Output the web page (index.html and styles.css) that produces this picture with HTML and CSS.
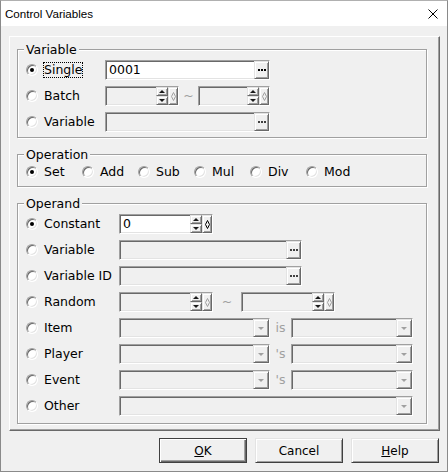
FILE: index.html
```html
<!DOCTYPE html>
<html>
<head>
<meta charset="utf-8">
<link rel="stylesheet" href="styles.css">
</head>
<body>
<div class="window">
  <div class="titlebar">
    <span class="title">Control Variables</span>
    <svg class="close" viewBox="0 0 10 10" width="10" height="10"><path d="M0.5 0.5 L9.5 9.5 M9.5 0.5 L0.5 9.5" stroke="#000" stroke-width="1" fill="none"/></svg>
  </div>
  <div class="client">
    <div class="panel">
      <div class="group g-var">
        <span class="legend">Variable</span>
        <div class="row">
          <div class="opt c79"><span class="radio on"></span><span class="lbl focus">Single</span></div>
          <div class="field en w165"><span class="val">0001</span><span class="btn dots"><i></i></span></div>
        </div>
        <div class="row">
          <div class="opt c79"><span class="radio"></span><span class="lbl">Batch</span></div>
          <div class="field w74"><span class="val"></span><span class="spin"><span class="btn up"><i></i></span><span class="btn down"><i></i></span></span><span class="btn dia"><svg viewBox="0 0 5 9" width="5" height="9"><path d="M2.5 0.5 L4.5 4.5 L2.5 8.5 L0.5 4.5 Z" fill="none" stroke="#a0a0a0"/></svg></span></div>
          <span class="sep w19">~</span>
          <div class="field w72"><span class="val"></span><span class="spin"><span class="btn up"><i></i></span><span class="btn down"><i></i></span></span><span class="btn dia"><svg viewBox="0 0 5 9" width="5" height="9"><path d="M2.5 0.5 L4.5 4.5 L2.5 8.5 L0.5 4.5 Z" fill="none" stroke="#a0a0a0"/></svg></span></div>
        </div>
        <div class="row">
          <div class="opt c79"><span class="radio"></span><span class="lbl">Variable</span></div>
          <div class="field w165"><span class="val"></span><span class="btn dots dis"><i></i></span></div>
        </div>
      </div>

      <div class="group g-op">
        <span class="legend">Operation</span>
        <div class="row">
          <div class="opt c56"><span class="radio on"></span><span class="lbl">Set</span></div>
          <div class="opt c56"><span class="radio"></span><span class="lbl">Add</span></div>
          <div class="opt c56"><span class="radio"></span><span class="lbl">Sub</span></div>
          <div class="opt c56"><span class="radio"></span><span class="lbl">Mul</span></div>
          <div class="opt c56"><span class="radio"></span><span class="lbl">Div</span></div>
          <div class="opt c56"><span class="radio"></span><span class="lbl">Mod</span></div>
        </div>
      </div>

      <div class="group g-opd">
        <span class="legend">Operand</span>
        <div class="row">
          <div class="opt c93"><span class="radio on"></span><span class="lbl">Constant</span></div>
          <div class="field en w94"><span class="val">0</span><span class="spin"><span class="btn up"><i></i></span><span class="btn down"><i></i></span></span><span class="btn dia"><svg viewBox="0 0 5 9" width="5" height="9"><path d="M2.5 0.5 L4.5 4.5 L2.5 8.5 L0.5 4.5 Z" fill="none" stroke="#000"/></svg></span></div>
        </div>
        <div class="row">
          <div class="opt c93"><span class="radio"></span><span class="lbl">Variable</span></div>
          <div class="field w183"><span class="val"></span><span class="btn dots dis"><i></i></span></div>
        </div>
        <div class="row">
          <div class="opt c93"><span class="radio"></span><span class="lbl">Variable ID</span></div>
          <div class="field w183"><span class="val"></span><span class="btn dots dis"><i></i></span></div>
        </div>
        <div class="row">
          <div class="opt c93"><span class="radio"></span><span class="lbl">Random</span></div>
          <div class="field w94"><span class="val"></span><span class="spin"><span class="btn up"><i></i></span><span class="btn down"><i></i></span></span><span class="btn dia"><svg viewBox="0 0 5 9" width="5" height="9"><path d="M2.5 0.5 L4.5 4.5 L2.5 8.5 L0.5 4.5 Z" fill="none" stroke="#a0a0a0"/></svg></span></div>
          <span class="sep w28">~</span>
          <div class="field w94"><span class="val"></span><span class="spin"><span class="btn up"><i></i></span><span class="btn down"><i></i></span></span><span class="btn dia"><svg viewBox="0 0 5 9" width="5" height="9"><path d="M2.5 0.5 L4.5 4.5 L2.5 8.5 L0.5 4.5 Z" fill="none" stroke="#a0a0a0"/></svg></span></div>
        </div>
        <div class="row">
          <div class="opt c93"><span class="radio"></span><span class="lbl">Item</span></div>
          <div class="field w151"><span class="val"></span><span class="btn drop"><i></i></span></div>
          <span class="sep w21">is</span>
          <div class="field w122"><span class="val"></span><span class="btn drop"><i></i></span></div>
        </div>
        <div class="row">
          <div class="opt c93"><span class="radio"></span><span class="lbl">Player</span></div>
          <div class="field w151"><span class="val"></span><span class="btn drop"><i></i></span></div>
          <span class="sep w21">'s</span>
          <div class="field w122"><span class="val"></span><span class="btn drop"><i></i></span></div>
        </div>
        <div class="row">
          <div class="opt c93"><span class="radio"></span><span class="lbl">Event</span></div>
          <div class="field w151"><span class="val"></span><span class="btn drop"><i></i></span></div>
          <span class="sep w21">'s</span>
          <div class="field w122"><span class="val"></span><span class="btn drop"><i></i></span></div>
        </div>
        <div class="row">
          <div class="opt c93"><span class="radio"></span><span class="lbl">Other</span></div>
          <div class="field w294"><span class="val"></span><span class="btn drop"><i></i></span></div>
        </div>
      </div>
    </div>
    <div class="buttons">
      <button class="pb def"><u>O</u>K</button>
      <button class="pb">Cancel</button>
      <button class="pb"><u>H</u>elp</button>
    </div>
  </div>
</div>
</body>
</html>
```

FILE: styles.css
```css
* { box-sizing: border-box; }
html, body { margin: 0; padding: 0; }
body {
  width: 448px; height: 472px; overflow: hidden;
  background: #f0f0f0;
  font-family: "DejaVu Sans", Verdana, sans-serif;
  font-size: 12.5px;
  color: #000;
}
.window {
  width: 448px; height: 472px;
  border: 1px solid #8a8a8a;
  border-top-color: #b0b0b0;
  background: #f0f0f0;
  display: flex; flex-direction: column;
}
.titlebar {
  height: 25px; flex: none;
  background: #fff;
  display: flex; align-items: center; justify-content: space-between;
  padding: 0 9px 0 4px;
}
.title { font-family: "Liberation Sans", Arial, sans-serif; font-size: 11.6px; color: #000; }
.close { display: block; }
.client { flex: 1; padding: 10px 0 0 8px; }

.panel {
  width: 431px; height: 395px;
  border-top: 1px solid #fff; border-left: 1px solid #fff;
  border-right: 1px solid #696969; border-bottom: 1px solid #696969;
  box-shadow: inset -1px -1px #a0a0a0;
  padding-top: 12px;
}

.group {
  position: relative;
  width: 410px; margin-left: 7px;
  border: 1px solid #a0a0a0;
  box-shadow: inset 1px 1px #fff, 1px 1px 0 #fff;
  display: flex; flex-direction: column; gap: 6px;
  padding-left: 8px;
}
.legend {
  position: absolute; top: -8px; left: 6px;
  padding: 0 2px; line-height: 15px;
  background: #f0f0f0;
}
.g-var { padding-top: 10px; padding-bottom: 5px; }
.g-op { margin-top: 16px; padding-top: 7px; padding-bottom: 4px; }
.g-opd { margin-top: 16px; padding-top: 10px; padding-bottom: 7px; }

.row { display: flex; align-items: center; height: 20px; }

.opt { display: flex; align-items: center; flex: none; height: 20px; }
.c79 { width: 79px; }
.c93 { width: 93px; }
.c56 { width: 56px; }

.radio {
  position: relative; flex: none;
  width: 12px; height: 12px; border-radius: 50%;
  background: #fff;
  border: 1px solid; border-color: #a0a0a0 #fff #fff #a0a0a0;
  box-shadow: inset 1px 1px #696969, inset -1px -1px #e3e3e3;
}
.radio.on::after {
  content: ""; position: absolute; left: 3px; top: 3px;
  width: 4px; height: 4px; border-radius: 50%; background: #000;
}
.lbl { margin-left: 5px; border: 1px dotted transparent; line-height: 14px; white-space: nowrap; }
.lbl.focus { border-color: #000; }

.field {
  flex: none; height: 20px;
  display: flex; align-items: stretch;
  border: 1px solid; border-color: #a0a0a0 #fff #fff #a0a0a0;
  box-shadow: inset 1px 1px #696969, inset -1px -1px #e3e3e3;
  background: #f0f0f0;
}
.field.en { background: #fff; }
.val { flex: 1; padding-left: 3px; line-height: 18px; }
.w165 { width: 165px; }
.w74 { width: 74px; }
.w72 { width: 72px; }
.w94 { width: 94px; }
.w183 { width: 183px; }
.w151 { width: 151px; }
.w122 { width: 122px; }
.w294 { width: 294px; }

.sep { flex: none; text-align: center; color: #a0a0a0; line-height: 20px; }
.w19 { width: 19px; }
.w28 { width: 28px; }
.w21 { width: 21px; }

.btn {
  flex: none;
  display: flex; align-items: center; justify-content: center;
  background: #f0f0f0;
  border: 1px solid; border-color: #e3e3e3 #696969 #696969 #e3e3e3;
  box-shadow: inset 1px 1px #fff, inset -1px -1px #a0a0a0;
}
.dots { width: 15px; }
.dots i {
  display: block; width: 8px; height: 2px;
  background: linear-gradient(90deg, #000 0 2px, transparent 2px 3px, #000 3px 5px, transparent 5px 6px, #000 6px 8px);
}
.dots.dis i {
  background: linear-gradient(90deg, #404040 0 2px, transparent 2px 3px, #404040 3px 5px, transparent 5px 6px, #404040 6px 8px);
}
.spin { flex: none; width: 12px; display: flex; flex-direction: column; }
.spin .btn { height: 9px; width: 12px; }
.up i { display: block; width: 0; height: 0; border-left: 3px solid transparent; border-right: 3px solid transparent; border-bottom: 3px solid #1a1a1a; }
.down i { display: block; width: 0; height: 0; border-left: 3px solid transparent; border-right: 3px solid transparent; border-top: 3px solid #1a1a1a; }
.dia { width: 10px; }
.dia svg { display: block; }
.drop { width: 16px; }
.drop i { display: block; width: 0; height: 0; margin-top: 1px; border-left: 3px solid transparent; border-right: 3px solid transparent; border-top: 3px solid #a0a0a0; }

.buttons {
  width: 431px; padding-right: 1px;
  margin-top: 7px;
  display: flex; justify-content: flex-end; gap: 8px;
}
.pb {
  width: 88px; height: 25px; margin: 0; padding: 0;
  font-family: "DejaVu Sans", Verdana, sans-serif; font-size: 12px; color: #000;
  background: #f0f0f0;
  border: 1px solid; border-color: #e3e3e3 #404040 #404040 #e3e3e3;
  box-shadow: inset 1px 1px #fff, inset -1px -1px #a0a0a0;
}
.pb.def {
  border: 1px solid #404040;
  box-shadow: inset 1px 1px #fff, inset -1px -1px #696969, inset -2px -2px #a0a0a0;
}
```
